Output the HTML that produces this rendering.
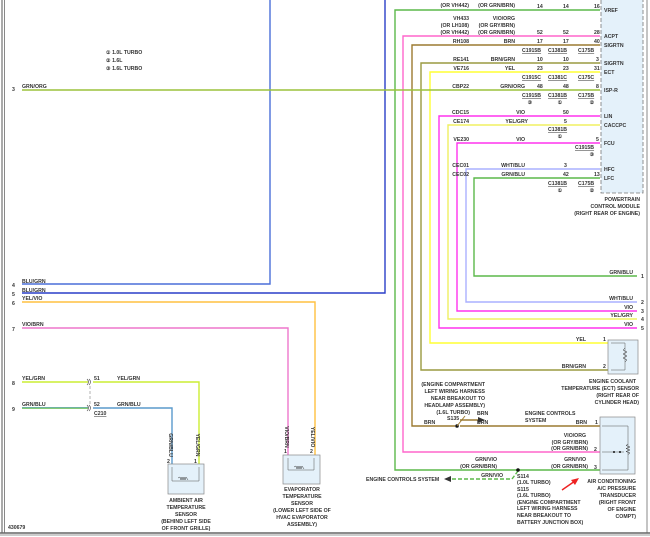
<!DOCTYPE html>
<html><head><meta charset="utf-8"><style>
html,body{margin:0;padding:0;background:#fff}
svg{display:block}
text{font-family:"Liberation Sans",sans-serif;font-size:5.2px;fill:#333;font-weight:bold}
.r{text-anchor:end}.m{text-anchor:middle}
.u{text-decoration:underline}
</style></head><body>
<svg width="650" height="537" viewBox="0 0 650 537" xmlns="http://www.w3.org/2000/svg">
<rect width="650" height="537" fill="#fff"/>
<line x1="2" y1="0" x2="2" y2="533" stroke="#555" stroke-width="1"/>
<line x1="4.5" y1="0" x2="4.5" y2="533" stroke="#888" stroke-width="1"/>
<line x1="647" y1="0" x2="647" y2="533" stroke="#888" stroke-width="1"/>
<line x1="0" y1="533" x2="650" y2="533" stroke="#666" stroke-width="1.5"/>
<line x1="0" y1="535" x2="650" y2="535" stroke="#999" stroke-width="1"/>
<rect x="601" y="-2" width="42" height="195" fill="#e4f1fa" stroke="#777" stroke-width="0.8" stroke-dasharray="4,2"/>
<g fill="none" stroke-width="1.4">
<polyline points="270,0 270,284 22,284" stroke="#4a6fd8"/>
<polyline points="385,0 385,293 22,293" stroke="#2a3fc8"/>
<polyline points="600,10 395,10 395,470 600,470" stroke="#5cb84a"/>
<polyline points="600,36 403,36 403,452 600,452" stroke="#ff66cc"/>
<polyline points="600,45 412,45 412,426 455,426" stroke="#9c7a30"/>
<line x1="460" y1="426" x2="600" y2="426" stroke="#9c7a30"/>
<polyline points="460,420 478,420" stroke="#9c7a30"/>
<polyline points="600,63 421,63 421,370 608,370" stroke="#9a9a40"/>
<polyline points="600,72 430,72 430,343 608,343" stroke="#ffff33"/>
<line x1="22" y1="90" x2="600" y2="90" stroke="#9cc23c"/>
<polyline points="600,116 439,116 439,328 637,328" stroke="#ff33ee"/>
<polyline points="600,125 448,125 448,319 637,319" stroke="#f0f060"/>
<polyline points="600,143 457,143 457,311 637,311" stroke="#ff33ee"/>
<polyline points="600,169 466,169 466,302 637,302" stroke="#aab0ff"/>
<polyline points="600,178 474,178 474,276 637,276" stroke="#5cb84a"/>
<polyline points="22,302 315,302 315,455" stroke="#ffc040"/>
<polyline points="22,328 288,328 288,455" stroke="#ee77cc"/>
<line x1="22" y1="382" x2="88" y2="382" stroke="#ccee33"/>
<polyline points="93,382 199,382 199,464" stroke="#ccee33"/>
<line x1="22" y1="408" x2="88" y2="408" stroke="#5cb84a"/>
<polyline points="93,408 172,408 172,464" stroke="#5a9acc"/>
</g>
<line x1="22" y1="407.5" x2="88" y2="407.5" stroke="#5a9acc" stroke-width="0.6"/>
<line x1="90" y1="386" x2="90" y2="404" stroke="#666" stroke-width="0.5" stroke-dasharray="3,2"/>
<path d="M87,379 q3,3 0,6 M89,379 q3,3 0,6 M87,405 q3,3 0,6 M89,405 q3,3 0,6" stroke="#444" fill="none" stroke-width="0.6"/>
<polyline points="518,471 512,479 452,479" fill="none" stroke="#5cb84a" stroke-width="1.4" stroke-dasharray="4,2"/>
<polygon points="444,479 451,476 451,482" fill="#333"/>
<polygon points="485,420 478,417 478,423" fill="#333"/>
<circle cx="457" cy="426" r="1.8" fill="#111"/>
<circle cx="518" cy="470" r="1.8" fill="#111"/>
<path d="M457,426 L465,416" stroke="#9c7a30" stroke-width="1"/>
<rect x="608" y="340" width="30" height="34" fill="#e4f1fa" stroke="#888" stroke-width="0.7"/>
<path d="M611,343 h14 v27 h-14" fill="none" stroke="#555" stroke-width="0.5"/>
<path d="M625,348 l-2,2 l4,2 l-4,2 l4,2 l-4,2 l4,2 l-2,2" fill="none" stroke="#333" stroke-width="0.5"/>
<rect x="600" y="417" width="35" height="57" fill="#e4f1fa" stroke="#888" stroke-width="0.7"/>
<path d="M602,426 h26 v44 h-26 M602,452 h22" fill="none" stroke="#555" stroke-width="0.5"/>
<path d="M628,444 l-2,1.5 l4,1.5 l-4,1.5 l4,1.5 l-4,1.5 l4,1.5 l-2,1.5" fill="none" stroke="#333" stroke-width="0.5"/>
<circle cx="614" cy="452" r="1" fill="#111"/><circle cx="620" cy="452" r="1" fill="#111"/>
<rect x="168" y="464" width="36" height="30" fill="#e4f1fa" stroke="#888" stroke-width="0.7"/>
<path d="M172,467 v14 h27 v-14" fill="none" stroke="#555" stroke-width="0.5"/>
<path d="M178,478 l2,-1 l1,3 l1,-3 l1,3 l1,-3 l1,3 l1,-3 l2,3" fill="none" stroke="#333" stroke-width="0.5"/>
<rect x="283" y="455" width="37" height="29" fill="#e4f1fa" stroke="#888" stroke-width="0.7"/>
<path d="M288,458 v12 h26 v-12" fill="none" stroke="#555" stroke-width="0.5"/>
<path d="M294,467 l2,-1 l1,3 l1,-3 l1,3 l1,-3 l1,3 l1,-3 l2,3" fill="none" stroke="#333" stroke-width="0.5"/>
<path d="M562,490 L575,481" stroke="#e22" stroke-width="1.4"/><polygon points="579,478 571,480 575,485" fill="#e22"/>

<text x="106" y="54">① 1.0L TURBO</text>
<text x="106" y="62">② 1.6L</text>
<text x="106" y="70">③ 1.6L TURBO</text>
<text x="12" y="91">3</text><text x="22" y="88">GRN/ORG</text>
<text x="12" y="287">4</text><text x="22" y="283">BLU/GRN</text>
<text x="12" y="296">5</text><text x="22" y="292">BLU/GRN</text>
<text x="12" y="305">6</text><text x="22" y="300">YEL/VIO</text>
<text x="12" y="331">7</text><text x="22" y="326">VIO/BRN</text>
<text x="12" y="385">8</text><text x="22" y="380">YEL/GRN</text>
<text x="12" y="411">9</text><text x="22" y="406">GRN/BLU</text>
<text x="94" y="380">51</text><text x="117" y="380">YEL/GRN</text>
<text x="94" y="406">52</text><text x="117" y="406">GRN/BLU</text>
<text x="94" y="415" class="u">C210</text>
<text transform="translate(169,445) rotate(90)" class="m">GRN/BLU</text>
<text transform="translate(196,445) rotate(90)" class="m">YEL/GRN</text>
<text transform="translate(285,437) rotate(90)" class="m">VIO/BRN</text>
<text transform="translate(311,437) rotate(90)" class="m">YEL/VIO</text>
<text x="167" y="463">2</text><text x="194" y="463">1</text>
<text x="284" y="453">1</text><text x="310" y="453">2</text>
<text x="186" y="502" class="m">AMBIENT AIR</text>
<text x="186" y="509" class="m">TEMPERATURE</text>
<text x="186" y="516" class="m">SENSOR</text>
<text x="186" y="523" class="m">(BEHIND LEFT SIDE</text>
<text x="186" y="530" class="m">OF FRONT GRILLE)</text>
<text x="302" y="491" class="m">EVAPORATOR</text>
<text x="302" y="498" class="m">TEMPERATURE</text>
<text x="302" y="505" class="m">SENSOR</text>
<text x="302" y="512" class="m">(LOWER LEFT SIDE OF</text>
<text x="302" y="519" class="m">HVAC EVAPORATOR</text>
<text x="302" y="526" class="m">ASSEMBLY)</text>
<text x="8" y="529">430679</text>

<text x="469" y="7" class="r">(OR VH442)</text><text x="515" y="7" class="r">(OR GRN/BRN)</text><text x="537" y="8">14</text><text x="563" y="8">14</text><text x="594" y="8">16</text>
<text x="469" y="20" class="r">VH433</text><text x="515" y="20" class="r">VIO/ORG</text>
<text x="469" y="27" class="r">(OR LH108)</text><text x="515" y="27" class="r">(OR GRY/BRN)</text>
<text x="469" y="34" class="r">(OR VH442)</text><text x="515" y="34" class="r">(OR GRN/BRN)</text><text x="537" y="34">52</text><text x="563" y="34">52</text><text x="594" y="34">28</text>
<text x="469" y="43" class="r">RH108</text><text x="515" y="43" class="r">BRN</text><text x="537" y="43">17</text><text x="563" y="43">17</text><text x="594" y="43">40</text>
<text x="522" y="52" class="u">C1915B</text><text x="548" y="52" class="u">C1381B</text><text x="578" y="52" class="u">C175B</text>
<text x="469" y="61" class="r">RE141</text><text x="515" y="61" class="r">BRN/GRN</text><text x="537" y="61">10</text><text x="563" y="61">10</text><text x="596" y="61">3</text>
<text x="469" y="70" class="r">VE716</text><text x="515" y="70" class="r">YEL</text><text x="537" y="70">23</text><text x="563" y="70">23</text><text x="594" y="70">31</text>
<text x="522" y="79" class="u">C1915C</text><text x="548" y="79" class="u">C1381C</text><text x="578" y="79" class="u">C175C</text>
<text x="469" y="88" class="r">CBP22</text><text x="525" y="88" class="r">GRN/ORG</text><text x="537" y="88">48</text><text x="563" y="88">48</text><text x="596" y="88">8</text>
<text x="522" y="97" class="u">C1915B</text><text x="548" y="97" class="u">C1381B</text><text x="578" y="97" class="u">C175B</text>
<text x="530" y="104" class="m">③</text><text x="560" y="104" class="m">①</text><text x="592" y="104" class="m">②</text>
<text x="469" y="114" class="r">CDC15</text><text x="525" y="114" class="r">VIO</text><text x="563" y="114">50</text>
<text x="469" y="123" class="r">CE174</text><text x="528" y="123" class="r">YEL/GRY</text><text x="564" y="123">5</text>
<text x="548" y="131" class="u">C1381B</text><text x="560" y="138" class="m">①</text>
<text x="469" y="141" class="r">VE230</text><text x="525" y="141" class="r">VIO</text><text x="596" y="141">5</text>
<text x="575" y="149" class="u">C1915B</text><text x="592" y="156" class="m">③</text>
<text x="469" y="167" class="r">CEC01</text><text x="525" y="167" class="r">WHT/BLU</text><text x="564" y="167">3</text>
<text x="469" y="176" class="r">CEC02</text><text x="525" y="176" class="r">GRN/BLU</text><text x="563" y="176">42</text><text x="594" y="176">13</text>
<text x="548" y="185" class="u">C1381B</text><text x="578" y="185" class="u">C175B</text>
<text x="560" y="192" class="m">①</text><text x="592" y="192" class="m">②</text>
<text x="604" y="12">VREF</text><text x="604" y="38">ACPT</text><text x="604" y="47">SIGRTN</text>
<text x="604" y="65">SIGRTN</text><text x="604" y="74">ECT</text><text x="604" y="92">ISP-R</text>
<text x="604" y="118">LIN</text><text x="604" y="127">CACCPC</text><text x="604" y="145">FCU</text>
<text x="604" y="171">HFC</text><text x="604" y="180">LFC</text>
<text x="640" y="201" class="r">POWERTRAIN</text>
<text x="640" y="208" class="r">CONTROL MODULE</text>
<text x="640" y="215" class="r">(RIGHT REAR OF ENGINE)</text>
<text x="633" y="274" class="r">GRN/BLU</text><text x="641" y="278">1</text>
<text x="633" y="300" class="r">WHT/BLU</text><text x="641" y="304">2</text>
<text x="633" y="309" class="r">VIO</text><text x="641" y="313">3</text>
<text x="633" y="317" class="r">YEL/GRY</text><text x="641" y="321">4</text>
<text x="633" y="326" class="r">VIO</text><text x="641" y="330">5</text>
<text x="586" y="341" class="r">YEL</text><text x="603" y="341">1</text>
<text x="586" y="368" class="r">BRN/GRN</text><text x="603" y="368">2</text>
<text x="636" y="383" class="r">ENGINE COOLANT</text>
<text x="639" y="390" class="r">TEMPERATURE (ECT) SENSOR</text>
<text x="639" y="397" class="r">(RIGHT REAR OF</text>
<text x="639" y="404" class="r">CYLINDER HEAD)</text>
<text x="485" y="386" class="r">(ENGINE COMPARTMENT</text>
<text x="485" y="393" class="r">LEFT WIRING HARNESS</text>
<text x="485" y="400" class="r">NEAR BREAKOUT TO</text>
<text x="485" y="407" class="r">HEADLAMP ASSEMBLY)</text>
<text x="470" y="414" class="r">(1.6L TURBO)</text>
<text x="447" y="420">S135</text>
<text x="477" y="415">BRN</text><text x="424" y="424">BRN</text><text x="477" y="424">BRN</text>
<text x="525" y="415">ENGINE CONTROLS</text><text x="525" y="422">SYSTEM</text>
<text x="587" y="424" class="r">BRN</text><text x="595" y="424">1</text>
<text x="586" y="437" class="r">VIO/ORG</text>
<text x="588" y="444" class="r">(OR GRY/BRN)</text>
<text x="588" y="450" class="r">(OR GRN/BRN)</text><text x="594" y="451">2</text>
<text x="586" y="461" class="r">GRN/VIO</text>
<text x="588" y="468" class="r">(OR GRN/BRN)</text><text x="594" y="469">3</text>
<text x="497" y="461" class="r">GRN/VIO</text>
<text x="497" y="468" class="r">(OR GRN/BRN)</text>
<text x="503" y="477" class="r">GRN/VIO</text>
<text x="366" y="481">ENGINE CONTROLS SYSTEM</text>
<text x="517" y="478">S114</text><text x="517" y="484">(1.0L TURBO)</text>
<text x="517" y="491">S115</text><text x="517" y="497">(1.6L TURBO)</text>
<text x="517" y="504">(ENGINE COMPARTMENT</text>
<text x="517" y="510">LEFT WIRING HARNESS</text>
<text x="517" y="517">NEAR BREAKOUT TO</text>
<text x="517" y="524">BATTERY JUNCTION BOX)</text>
<text x="636" y="483" class="r">AIR CONDITIONING</text>
<text x="636" y="490" class="r">A/C PRESSURE</text>
<text x="636" y="497" class="r">TRANSDUCER</text>
<text x="636" y="504" class="r">(RIGHT FRONT</text>
<text x="636" y="511" class="r">OF ENGINE</text>
<text x="636" y="518" class="r">COMPT)</text>
</svg>
</body></html>
